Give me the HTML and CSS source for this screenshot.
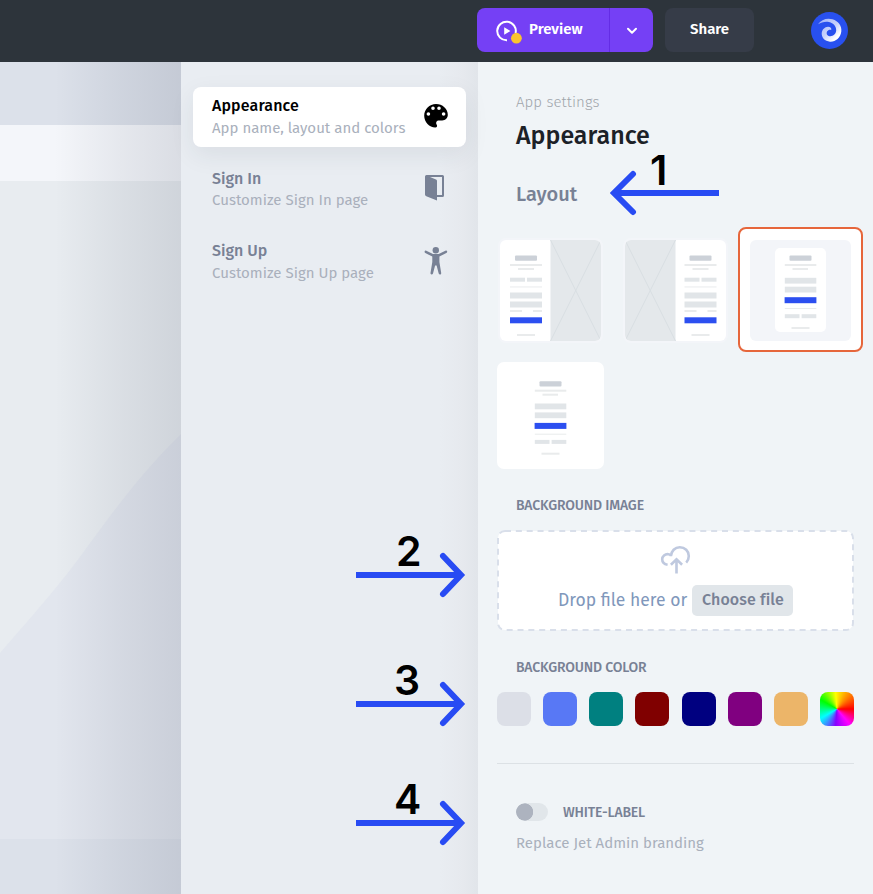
FILE: index.html
```
<!DOCTYPE html>
<html lang="en">
<head>
<meta charset="utf-8">
<title>App settings</title>
<link rel="stylesheet" href="styles.css">
</head>
<body>
<header class="topbar">
  <div class="preview-group">
    <div class="preview-main">
      <svg class="play" width="28" height="28" viewBox="0 0 28 28"><path d="M20.600 13.500A9.300 9.300 0 1 0 12 20.800" transform="translate(0 .5)" fill="none" stroke="#fff" stroke-width="2"/><path d="M9.200 8.300v7.400l6.200-3.700z" fill="#fff"/><circle cx="21.400" cy="19.200" r="5.400" fill="#fac42f"/></svg>
      <span class="t preview-label">Preview</span>
    </div>
    <div class="preview-more"><svg width="12" height="8" viewBox="0 0 12 8"><path d="M2 1.800l4 4 4-4" fill="none" stroke="#fff" stroke-width="2" stroke-linecap="round" stroke-linejoin="round"/></svg></div>
  </div>
  <div class="share"><span class="t share-label">Share</span></div>
  <svg class="logo" width="37" height="37" viewBox="0 0 37 37"><defs><linearGradient id="lg" x1="0" y1="0" x2="1" y2="1"><stop offset="0" stop-color="#fff" stop-opacity=".5"/><stop offset=".5" stop-color="#c5d0fb"/><stop offset=".8" stop-color="#fff"/></linearGradient></defs><circle cx="18.500" cy="18.500" r="18.500" fill="#2850ef"/><path d="M7 12.300C10 7.500 16 5.600 21.500 7.200C27.500 9 31 14 30.300 19.500C29.500 25.800 24.500 30 19 29.700C13.800 29.300 10.500 25.500 10.700 21.300C11 17.500 13.700 15 17 14.800C19.500 14.800 20.800 16.300 20.200 18C18.800 17.300 17.200 17.800 16.200 19.300C15 21.500 16 23.800 18.500 24.200C22 24.600 25 22 25.200 18.300C25.300 14.300 22.500 11 18 10C14 9.200 10.500 10.300 7 12.300Z" fill="url(#lg)"/></svg>
</header>
<div class="workspace">
  <aside class="canvas">
    <svg width="181" height="832" viewBox="0 0 181 832">
      <defs><linearGradient id="shade"><stop offset=".3" stop-color="#0a1430" stop-opacity="0"/><stop offset=".68" stop-color="#0a1430" stop-opacity=".065"/><stop offset="1" stop-color="#0a1430" stop-opacity=".11"/></linearGradient></defs>
      <rect width="181" height="832" fill="#dce1ea"/>
      <rect y="63" width="181" height="56" fill="#f4f6fa"/>
      <rect y="119" width="181" height="658" fill="#e8ecf0"/>
      <path d="M0 591C25 562 44 541 67 512C96 475 128 424 181 372V777H0Z" fill="#e2e6ee"/>
      <rect width="181" height="832" fill="url(#shade)"/>
    </svg>
  </aside>
  <nav class="menu">
    <div class="item active">
      <div class="item-text"><span class="t item-title first">Appearance</span><span class="t item-sub">App name, layout and colors</span></div>
      <svg width="26" height="26" viewBox="0 0 26 26"><path fill-rule="evenodd" d="M13 1C6.400 1 1.200 6.200 1.200 12.700C1.200 19.200 6.400 24.400 12.200 24.500C14.200 24.500 14.500 22.800 13.600 21.400C12.500 19.500 13.600 17.400 16 17.400H19.200C22.500 17.400 24.800 15 24.800 11.800C24.800 5.800 19.500 1 13 1ZM5.400 9.200a1.800 1.800 0 1 1 0 3.600a1.800 1.800 0 1 1 0-3.600ZM10 3.500a1.800 1.800 0 1 1 0 3.600a1.800 1.800 0 1 1 0-3.600ZM16 3.500a1.800 1.800 0 1 1 0 3.600a1.800 1.800 0 1 1 0-3.600ZM20.600 9.200a1.800 1.800 0 1 1 0 3.600a1.800 1.800 0 1 1 0-3.600Z"/></svg>
    </div>
    <div class="item second">
      <div class="item-text"><span class="t item-title">Sign In</span><span class="t item-sub">Customize Sign In page</span></div>
      <svg width="26" height="28" viewBox="0 0 26 28"><path fill-rule="evenodd" fill="#788195" d="M3.500 1H19.500Q21 1 21 2.500V21.500Q21 23 19.500 23H14V26.500L3.300 22.300Q2 21.700 2 20.500V2.500Q2 1 3.500 1ZM7 3L13 5.600Q14 6 14 7V21H19V3Z"/></svg>
    </div>
    <div class="item">
      <div class="item-text"><span class="t item-title">Sign Up</span><span class="t item-sub">Customize Sign Up page</span></div>
      <svg width="26" height="30" viewBox="0 0 26 30"><circle cx="12.800" cy="4.200" r="3.200" fill="#788195"/><path fill="#788195" d="M2.800 4.600L10 8H15.700L22.900 4.600Q24 4.500 24.200 5.500Q24.400 6.400 23.300 7L16.400 10.600V16L18.200 27Q18.300 28.300 17.200 28.500Q16 28.600 15.700 27.400L13.600 19.500H12.100L10 27.400Q9.600 28.600 8.500 28.500Q7.300 28.300 7.500 27L9.300 16V10.600L2.300 7Q1.400 6.400 1.600 5.500Q1.900 4.500 2.800 4.600Z"/></svg>
    </div>
  </nav>
  <main class="settings">
    <div class="t crumb">App settings</div>
    <h1 class="t heading">Appearance</h1>
    <h2 class="t sub">Layout</h2>
    <div class="layouts">
      <div class="option">
        <svg width="107" height="107" viewBox="-3 -3 107 107">
          <defs>
            <g id="form"><rect x="15" y="15.600" width="22" height="5.200" rx="1" fill="#ccd1d8"/><g fill="#e9ebec"><rect x="10" y="24" width="32" height="2"/><rect x="18" y="28" width="16" height="2"/><rect x="10" y="70" width="12" height="2"/><rect x="33" y="70" width="9" height="2"/><rect x="17" y="94" width="18" height="2"/></g><rect x="10" y="46" width="32" height="1.800" fill="#f3f4f5"/><g fill="#e1e5e8"><rect x="10" y="37.700" width="15" height="4"/><rect x="27" y="37.700" width="15" height="4"/><rect x="10" y="52.500" width="32" height="6"/><rect x="10" y="61.500" width="32" height="6"/></g><rect x="10" y="77.300" width="32" height="6" fill="#2c4ff0"/></g>
            <g id="picture"><rect width="50.500" height="101" fill="#e4e8eb"/><path d="M0 0L50.500 101M50.500 0L0 101" fill="none" stroke="#d8dee2"/></g>
            <g id="compact"><rect x="39.500" y="15.600" width="22" height="5.200" rx="1" fill="#ccd1d8"/><g fill="#e9ebec"><rect x="34.800" y="24" width="31.500" height="2"/><rect x="42.500" y="28" width="15.500" height="2"/><rect x="34.800" y="68" width="31.500" height="1"/><rect x="41.500" y="87" width="18" height="2"/></g><g fill="#e1e5e8"><rect x="34.800" y="37.800" width="31.500" height="5.800"/><rect x="34.800" y="46.700" width="31.500" height="5.800"/><rect x="34.800" y="74.200" width="14.700" height="4"/><rect x="51.600" y="74.200" width="14.700" height="4"/></g><rect x="34.600" y="57.200" width="31.800" height="6" fill="#2c4ff0"/></g>
            <clipPath id="round"><rect width="101" height="101" rx="6"/></clipPath>
          </defs>
          <rect x="-2" y="-2" width="105" height="105" rx="8" fill="#f3f5f9"/>
          <g clip-path="url(#round)"><rect width="101" height="101" fill="#fff"/><use href="#form"/><use href="#picture" x="50.500"/></g>
        </svg>
      </div>
      <div class="option">
        <svg width="107" height="107" viewBox="-3 -3 107 107"><rect x="-2" y="-2" width="105" height="105" rx="8" fill="#f3f5f9"/><g clip-path="url(#round)"><rect width="101" height="101" fill="#fff"/><use href="#picture"/><use href="#form" x="49.500"/></g></svg>
      </div>
      <div class="option selected">
        <svg width="107" height="107" viewBox="-3 -3 107 107"><rect width="101" height="101" rx="6" fill="#f3f5f9"/><rect x="25" y="8" width="51" height="84" rx="5" fill="#fff"/><use href="#compact"/></svg>
      </div>
      <div class="option">
        <svg width="107" height="107" viewBox="-3 -3 107 107"><rect x="-3" y="-3" width="107" height="107" rx="7" fill="#fff"/><use href="#compact" y=".7"/></svg>
      </div>
    </div>
    <h3 class="t label l1">BACKGROUND IMAGE</h3>
    <div class="drop">
      <svg class="frame" width="357" height="101" viewBox="0 0 357 101"><rect x="1" y="1" width="355" height="99" rx="7" fill="#fff" stroke="#d9dfea" stroke-width="2" stroke-dasharray="6 4.850"/></svg>
      <svg class="cloud" width="32" height="30" viewBox="0 0 32 30"><g fill="none" stroke="#bfc9df" stroke-width="2.600"><path d="M7.600 19.800C4.500 19.300 2.200 17.200 2.200 14.300C2.200 11 5 8.900 8.300 9.200C9.500 9.300 10.500 9.800 11 10.400"/><path d="M10.900 11.200C11.200 6 15 2.200 19.800 2.200C24.900 2.200 28.800 6 28.800 11C28.800 13.800 27.900 15.900 26.200 17.600"/><path d="M16.500 28.500V15.500M10.900 19.800L16.500 14.300L22.100 19.800"/></g></svg>
      <div class="drop-row"><span class="t drop-text">Drop file here or</span><span class="choose"><span class="t choose-label">Choose file</span></span></div>
    </div>
    <h3 class="t label l2">BACKGROUND COLOR</h3>
    <div class="swatches"><i class="c1"></i><i class="c2"></i><i class="c3"></i><i class="c4"></i><i class="c5"></i><i class="c6"></i><i class="c7"></i><i class="c8"></i></div>
    <hr>
    <div class="toggle-row"><span class="toggle"></span><span class="t label l3">WHITE-LABEL</span></div>
    <div class="t hint">Replace Jet Admin branding</div>
  </main>
</div>
<svg class="note note1" width="110" height="78" viewBox="0 -12 110 78"><g fill="none" stroke="#284bf3" stroke-width="6"><path d="M109 40H5"/><path d="M23 21L4 40L23 59" stroke-linecap="round"/></g><text x="40" y="31.500">1</text></svg>
<svg class="note note2" width="110" height="78" viewBox="0 -12 110 78"><g fill="none" stroke="#284bf3" stroke-width="6"><path d="M0 40H104"/><path d="M87 21L105 40L87 59" stroke-linecap="round"/></g><text x="40" y="31">2</text></svg>
<svg class="note note3" width="110" height="78" viewBox="0 -12 110 78"><g fill="none" stroke="#284bf3" stroke-width="6"><path d="M0 40H104"/><path d="M87 21L105 40L87 59" stroke-linecap="round"/></g><text x="38" y="31">3</text></svg>
<svg class="note note4" width="110" height="78" viewBox="0 -12 110 78"><g fill="none" stroke="#284bf3" stroke-width="6"><path d="M0 40H104"/><path d="M87 21L105 40L87 59" stroke-linecap="round"/></g><text x="38" y="31">4</text></svg>
</body>
</html>
```
FILE: styles.css
```
* { box-sizing: border-box; }
body { margin: 0; width: 873px; height: 894px; overflow: hidden; position: relative; background: #f0f4f7; font-family: "Fira Sans", "Noto Sans", sans-serif; }
.t { white-space: nowrap; }
h1, h2, h3 { margin: 0; font-weight: 500; }
svg { display: block; flex: none; }
.topbar { height: 62px; background: #2d343b; display: flex; padding: 8px 25px 0 477px; }
.preview-group { display: flex; width: 176px; height: 44px; border-radius: 8px; background: #7540f5; color: #fff; overflow: hidden; }
.preview-main { width: 133px; display: flex; border-right: 1px solid #642ce5; padding-left: 18px; }
.play { margin-top: 11px; }
.preview-label { margin: 10px 0 0 6px; font-size: 15px; line-height: 22px; font-weight: 600; }
.preview-more { flex: 1; display: flex; align-items: center; justify-content: center; padding-top: 2px; }
.share { width: 89px; height: 44px; margin-left: 12px; background: #363c48; color: #fff; border-radius: 8px; display: flex; padding-left: 25px; }
.share-label { margin-top: 10px; font-size: 15px; line-height: 22px; font-weight: 600; }
.logo { margin: 4px 0 0 57px; }
.workspace { display: flex; height: 832px; }
.canvas { width: 181px; }
.menu { width: 297px; padding: 25px 12px 0; background: linear-gradient(90deg, #e9edf2 87%, #e6e9ee 95%, #e1e5ea); }
.item { height: 60px; margin-bottom: 12.400px; display: flex; justify-content: space-between; align-items: center; padding: 0 17px 0 19px; border-radius: 8px; color: #788195; }
.item svg { margin-top: -2px; }
.item.active { background: #fff; color: #000; box-shadow: 0 8px 24px rgba(40, 50, 70, .08); }
.item-text { display: flex; flex-direction: column; }
.item-title { font-size: 16px; line-height: 22px; font-weight: 500; }
.item-title.first { letter-spacing: .13px; }
.second .item-title { padding-top: 1px; margin-bottom: -1px; }
.item-sub { font-size: 15px; line-height: 22px; color: #a9b0bc; }
.settings { width: 395px; padding-top: 30px; }
.crumb { margin-left: 38px; font-size: 15px; line-height: 20px; font-weight: 300; letter-spacing: .08px; color: #a0a5ab; }
.heading { margin: 9px 0 0 38px; font-size: 25px; line-height: 30px; color: #1c2127; }
.sub { margin: 31px 0 0 38px; font-size: 20px; line-height: 24px; color: #788195; }
.layouts { margin: 21.500px 0 0 10px; display: grid; grid-template-columns: repeat(3, 125px); grid-auto-rows: 125px; }
.option { display: flex; align-items: center; justify-content: center; border-radius: 8px; }
.selected { background: #fff; border: 2px solid #e6663b; margin: -1px 0 1px; padding-top: 2px; }
.label { font-size: 14px; line-height: 20px; font-weight: 500; letter-spacing: -.16px; color: #788195; }
.l1 { margin: 18.500px 0 14px 38px; }
.l3 { padding-top: 2px; }
.drop { position: relative; width: 357px; height: 101px; margin-left: 19px; display: flex; flex-direction: column; align-items: center; }
.frame { position: absolute; left: 0; top: 0; }
.cloud { position: relative; margin-top: 15px; }
.drop-row { position: relative; display: flex; width: 235px; margin-top: 10px; height: 31px; }
.drop-text { width: 134px; font-size: 17.500px; line-height: 31px; color: #8097bb; }
.choose { width: 101px; height: 31px; border-radius: 5px; background: #e1e6ea; display: flex; padding-left: 10px; }
.choose-label { font-size: 16px; line-height: 29px; font-weight: 500; letter-spacing: .1px; color: #788195; }
.l2 { margin: 27px 0 14px 38px; }
.swatches { margin-left: 19px; width: 357px; display: flex; justify-content: space-between; }
.swatches i { width: 34px; height: 34px; border-radius: 8px; }
.c1 { background: #dcdfe7; } .c2 { background: #5878f5; } .c3 { background: #008080; } .c4 { background: #800000; }
.c5 { background: #000080; } .c6 { background: #800080; } .c7 { background: #ecb569; }
.c8 { background: conic-gradient(from 90deg, #f00, #f0f 50deg, #80f 95deg, #0ff 150deg, #0f0 210deg, #ff0 265deg, #f80 310deg, #f00); }
hr { margin: 37px 0 0 19px; width: 357px; border: 0; border-top: 1px solid #dce1e5; }
.toggle-row { margin: 38px 0 0 38px; display: flex; align-items: center; height: 20px; }
.toggle { width: 32px; height: 18px; margin-right: 15px; border-radius: 9px; background: radial-gradient(circle at 8.500px 9px, #adb3bf 8.300px, #e1e6ea 9px); }
.hint { margin: 10px 0 0 38px; font-size: 15px; line-height: 22px; color: #a9b0bc; }
.note { position: absolute; }
.note text { font: 600 41px Inter, sans-serif; fill: #000; }
.note1 { left: 610px; top: 141px; }
.note2 { left: 356px; top: 523px; }
.note3 { left: 356px; top: 652px; }
.note4 { left: 356px; top: 771px; }
```
